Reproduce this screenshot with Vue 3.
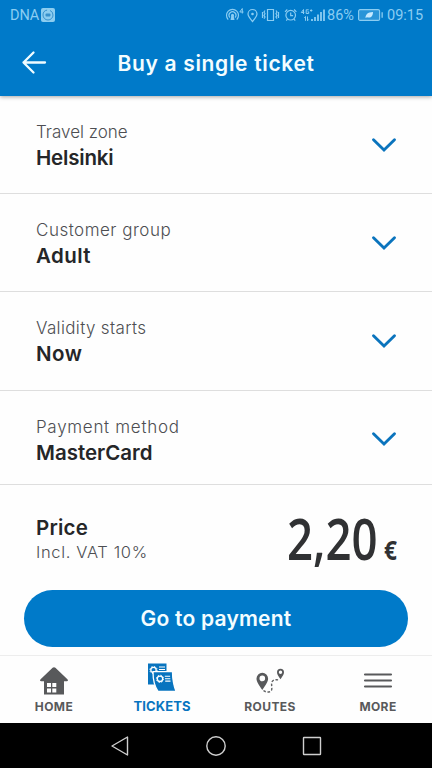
<script setup>
const fields = [
  { key: 'zone', label: 'Travel zone', value: 'Helsinki' },
  { key: 'group', label: 'Customer group', value: 'Adult' },
  { key: 'start', label: 'Validity starts', value: 'Now' },
  { key: 'method', label: 'Payment method', value: 'MasterCard' },
]
</script>

<template>
  <div class="screen">
    <header class="top">
      <div class="status">
        <span class="carrier">DNA</span>
        <svg class="badge" width="14" height="14" viewBox="0 0 14 14">
          <rect width="14" height="14" rx="2" fill="#8ccdf0" />
          <circle cx="7" cy="7" r="5" fill="none" stroke="#3791cc" stroke-width="1" stroke-dasharray="22 3" />
          <rect x="4.5" y="5.5" width="5" height="3" rx="1" fill="#3791cc" />
        </svg>
        <svg class="indicators" width="101" height="18" viewBox="0 0 101 18" fill="none" stroke="#8bcdf2" stroke-width="1.2">
          <path d="M3.2 13.6A6 6 0 1 1 11.800 13.600M5 11.500a3.400 3.400 0 1 1 5 0" />
          <circle cx="7.500" cy="9.300" r="1.500" fill="#8bcdf2" stroke="none" />
          <path d="M6.300 10h2.400l.8 4h-4z" fill="#8bcdf2" stroke="none" />
          <path d="M17.300 7.500V2.500L14.800 6H18.500" stroke-width="1" />
          <path d="M27.500 15.500C24.500 12 23 10.200 23 8a4.500 4.500 0 0 1 9 0c0 2.200-1.500 4-4.500 7.500Z" />
          <circle cx="27.500" cy="8" r="1.300" fill="#8bcdf2" stroke="none" />
          <path d="M42.500 3.500h6v11h-6zM40 4.500l-1 1.500 1 1.700-1 1.700 1 1.700-1 1.500M51 4.500l1 1.500-1 1.700 1 1.700-1 1.700 1 1.500M37.500 6v6M53.500 6v6" />
          <circle cx="65.700" cy="9.200" r="4.800" />
          <path d="M65.700 6.500v3.200h2.400M60 5.800l2.300-2.300M71.400 5.800l-2.300-2.300M62.500 13l-1.200 1.600M69 13l1.200 1.600" />
          <path d="M78.500 8V3.500L76.300 6.500h3M83.700 3.800h-2.500v3.700h2.500v-1.700h-1.200M85 4.500h2.400M86.200 3.300v2.400" stroke-width="1" />
          <path d="M80.500 10.500v4.300M79.300 11.800l1.200-1.300M82.500 10.500v4.300M83.700 13.500l-1.200 1.300" stroke-width="1" />
          <path d="M87 13v2M90 11v4M93 8.500V15M96 6v9M99 3.500V15" stroke-width="1.800" />
        </svg>
        <span class="percent">86%</span>
        <svg class="battery" width="26" height="12" viewBox="0 0 26 12">
          <rect x=".6" y=".6" width="21" height="10.800" rx="1.500" fill="#2995d8" stroke="#8bcdf2" stroke-width="1.100" />
          <path d="M23.500 3.200h1.300v5.600h-1.300z" fill="#8bcdf2" />
          <path d="M7.500 9c0-3.500 2-5.700 7.500-6 0 4-2 6.500-6 5.300Z" fill="#c6eaff" />
        </svg>
        <span class="clock">09:15</span>
      </div>
      <div class="titlebar">
        <svg class="back" width="26" height="26" viewBox="0 0 26 26" fill="none" stroke="#f0fcff" stroke-width="2.300" stroke-linecap="round" stroke-linejoin="round">
          <path d="M24 12.500H2.500M12.500 2.500 2.500 12.500l10 10" />
        </svg>
        <h1>Buy a single ticket</h1>
      </div>
    </header>

    <main>
      <div v-for="f in fields" :key="f.key" class="field" :class="f.key">
        <div>
          <div class="label">{{ f.label }}</div>
          <div class="value">{{ f.value }}</div>
        </div>
        <svg class="chevron" width="26" height="16" viewBox="0 0 26 16" fill="none" stroke="#0b74bd" stroke-width="2.900" stroke-linecap="round">
          <path d="M2.500 2.700 13 13 23.500 2.700" />
        </svg>
      </div>
      <section class="price">
        <div>
          <div class="value cost">Price</div>
          <div class="vat">Incl. VAT 10%</div>
        </div>
        <div class="amount"><span class="sum">2,20</span><span class="euro">€</span></div>
      </section>
      <button class="pay">Go to payment</button>
    </main>

    <nav class="tabs">
      <a class="tab">
        <svg width="30" height="30" viewBox="0 0 30 30">
          <path d="M15 1.200c.6 0 1 .2 1.400.6l12 11.500c1 1 .6 2-.6 2H25v13.200H5V15.300H2.200c-1.200 0-1.600-1-.6-2l12-11.500c.4-.4.800-.6 1.400-.6Z" fill="#58595b" />
          <path d="M8 17h4v4H8zM13.300 17h4v4h-4zM8 22.400h4v4H8zM13.300 22.400h4v4h-4z" fill="#fff" />
        </svg>
        <span class="home">HOME</span>
      </a>
      <a class="tab active">
        <svg width="30" height="30" viewBox="0 0 30 30">
          <path d="M1 1.500h18.500V13L8 22.500H1Z" fill="#0874bf" />
          <circle cx="6.500" cy="8" r="2.700" fill="none" stroke="#fff" stroke-width="1.300" />
          <circle cx="6.500" cy="8" r="3.600" fill="none" stroke="#fff" stroke-width="1" stroke-dasharray="1.410 1.410" />
          <path d="M12 5h6M12 7.500h6" stroke="#fff" stroke-width="1.100" />
          <path d="M6 9.700h19.500c0 8 1 13 3.500 19.600H11C7.500 24.300 6 18.500 6 9.700Z" fill="#0874bf" stroke="#fff" stroke-width="1.300" />
          <circle cx="13" cy="16.800" r="2.700" fill="none" stroke="#fff" stroke-width="1.300" />
          <circle cx="13" cy="16.800" r="3.600" fill="none" stroke="#fff" stroke-width="1" stroke-dasharray="1.410 1.410" />
          <path d="M17.800 14.300h5.300M18 16.700h5.300M18.200 19.100h5.300" stroke="#fff" stroke-width="1.100" />
        </svg>
        <span class="tickets">TICKETS</span>
      </a>
      <a class="tab">
        <svg width="30" height="30" viewBox="0 0 30 30" fill="none">
          <path fill-rule="evenodd" d="M7.300 24C3.500 18.500 1.500 15.500 1.500 12.500a5.800 5.800 0 0 1 11.600 0c0 3-2 6-5.800 11.500ZM7.300 9.600a2.800 2.800 0 1 0 0 5.600 2.800 2.800 0 0 0 0-5.600Z" fill="#58595b" />
          <path fill-rule="evenodd" d="M25.500 13.200c-2.300-3.200-3.500-5-3.500-6.900a3.500 3.500 0 0 1 7 0c0 1.900-1.200 3.700-3.500 6.900ZM25.500 4.600a1.700 1.700 0 1 0 0 3.400 1.700 1.700 0 0 0 0-3.400Z" fill="#58595b" />
          <path d="M8.500 24.500c2 2 8 2.500 8.300-1.500.2-2.600-.8-5.200.4-7.500 1-1.700 3.500-2 6.800-1.500" stroke="#606163" stroke-width="1.400" stroke-dasharray="2.600 1.700" />
        </svg>
        <span class="routes">ROUTES</span>
      </a>
      <a class="tab">
        <svg width="30" height="30" viewBox="0 0 30 30">
          <path d="M2 8.500h26M2 14.500h26M2 20.500h26" stroke="#58595b" stroke-width="2.100" stroke-linecap="round" />
        </svg>
        <span class="more">MORE</span>
      </a>
    </nav>

    <footer class="system">
      <svg width="22" height="22" viewBox="0 0 22 22"><path d="M18.500 2v18L3 11Z" /></svg>
      <svg width="22" height="22" viewBox="0 0 22 22"><circle cx="11" cy="11" r="9.200" /></svg>
      <svg width="22" height="22" viewBox="0 0 22 22"><rect x="2.500" y="2.500" width="17" height="17" rx=".5" /></svg>
    </footer>
  </div>
</template>

<style>
body {
  background: #fff;
}
</style>

<style scoped>
.screen {
  width: 432px;
  height: 768px;
  display: flex;
  flex-direction: column;
  overflow: hidden;
  background: #fefefe;
  font-family: Inter, "Open Sans", sans-serif;
  color: #252628;
}
svg {
  display: block;
  flex: none;
}
.top {
  height: 96px;
  flex: none;
  background: #007ac9;
  box-shadow: 0 1px 4px rgba(0, 0, 0, 0.35);
  z-index: 1;
}
.status {
  box-sizing: border-box;
  display: flex;
  align-items: center;
  height: 30px;
  padding: 0 9px 0 10px;
  font-family: Roboto, sans-serif;
  font-size: 14.5px;
  line-height: 30px;
  color: #8bcdf2;
  white-space: nowrap;
}
.status span {
  padding-top: 1px;
}
.carrier {
  width: 31px;
  letter-spacing: -0.1px;
}
.indicators {
  margin-left: auto;
}
.percent {
  width: 28px;
  margin-left: 1px;
}
.battery {
  margin-left: 3px;
}
.clock {
  margin-left: 3px;
  width: 36px;
}
.titlebar {
  display: flex;
  align-items: center;
  height: 66px;
  padding-left: 21px;
}
h1 {
  margin: 1px 0 0 70.5px;
  font-size: 21px;
  font-weight: 600;
  line-height: 28px;
  letter-spacing: 0.67px;
  color: #f3fdff;
  white-space: nowrap;
}
main {
  flex: none;
  height: 559px;
}
.field {
  box-sizing: border-box;
  display: flex;
  justify-content: space-between;
  align-items: flex-start;
  height: 98.2px;
  padding: 24px 35px 0 36px;
  border-bottom: 1.5px solid #dedede;
}
.label,
.vat {
  font-size: 17px;
  font-weight: 300;
  line-height: 24px;
  color: #4d4e52;
  white-space: nowrap;
}
.value {
  font-size: 20.5px;
  font-weight: 600;
  line-height: 28px;
  white-space: nowrap;
}
.zone .value {
  letter-spacing: -0.2px;
}
.group .label {
  letter-spacing: 0.5px;
}
.group .value {
  letter-spacing: 0.4px;
}
.start .label {
  letter-spacing: 0.35px;
}
.start .value {
  letter-spacing: 0.5px;
}
.method {
  height: 94.4px;
}
.method .label {
  letter-spacing: 0.7px;
}
.cost {
  letter-spacing: 0.2px;
}
.chevron {
  margin-top: 16.5px;
}
.price {
  display: flex;
  justify-content: space-between;
  height: 105px;
  box-sizing: border-box;
  padding: 29px 35px 0 36px;
}
.vat {
  font-size: 16.5px;
  line-height: 20px;
  letter-spacing: 0.65px;
}
.amount {
  display: flex;
  align-items: baseline;
  margin-top: -3px;
  font-family: "Open Sans", sans-serif;
  font-weight: 600;
  color: #303133;
  line-height: 54px;
}
.sum {
  width: 91px;
  font-size: 57px;
  transform: scaleX(0.8);
  transform-origin: 0 50%;
}
.euro {
  margin-left: 4px;
  font-size: 26px;
  font-weight: 700;
  transform: scaleX(0.87);
  transform-origin: 100% 50%;
}
.pay {
  display: block;
  width: 384px;
  height: 57.5px;
  margin: 0 auto;
  padding: 0;
  border: 0;
  border-radius: 29px;
  background: #007ac9;
  color: #f3fdff;
  font: 600 21px/58px Inter, sans-serif;
  letter-spacing: 0.22px;
}
.tabs {
  display: grid;
  grid-template-columns: repeat(4, 108px);
  height: 68px;
  flex: none;
  box-sizing: border-box;
  border-top: 1px solid #ededed;
  background: #fefefe;
}
.tab {
  display: flex;
  flex-direction: column;
  align-items: center;
  padding-top: 10px;
  font-size: 12px;
  font-weight: 700;
  line-height: 16px;
  letter-spacing: 0.4px;
  color: #58595b;
}
.tab span {
  margin-top: 3px;
}
.active {
  padding-top: 6px;
  color: #0874bf;
  font-size: 13px;
  letter-spacing: 0.1px;
}
.active span {
  margin-top: 6px;
}
.system {
  display: flex;
  justify-content: center;
  gap: 74px;
  height: 45px;
  box-sizing: border-box;
  padding: 12px 0 0;
  background: #000;
  fill: none;
  stroke: #cfcfcf;
  stroke-width: 1.4;
  stroke-linejoin: round;
}
</style>
